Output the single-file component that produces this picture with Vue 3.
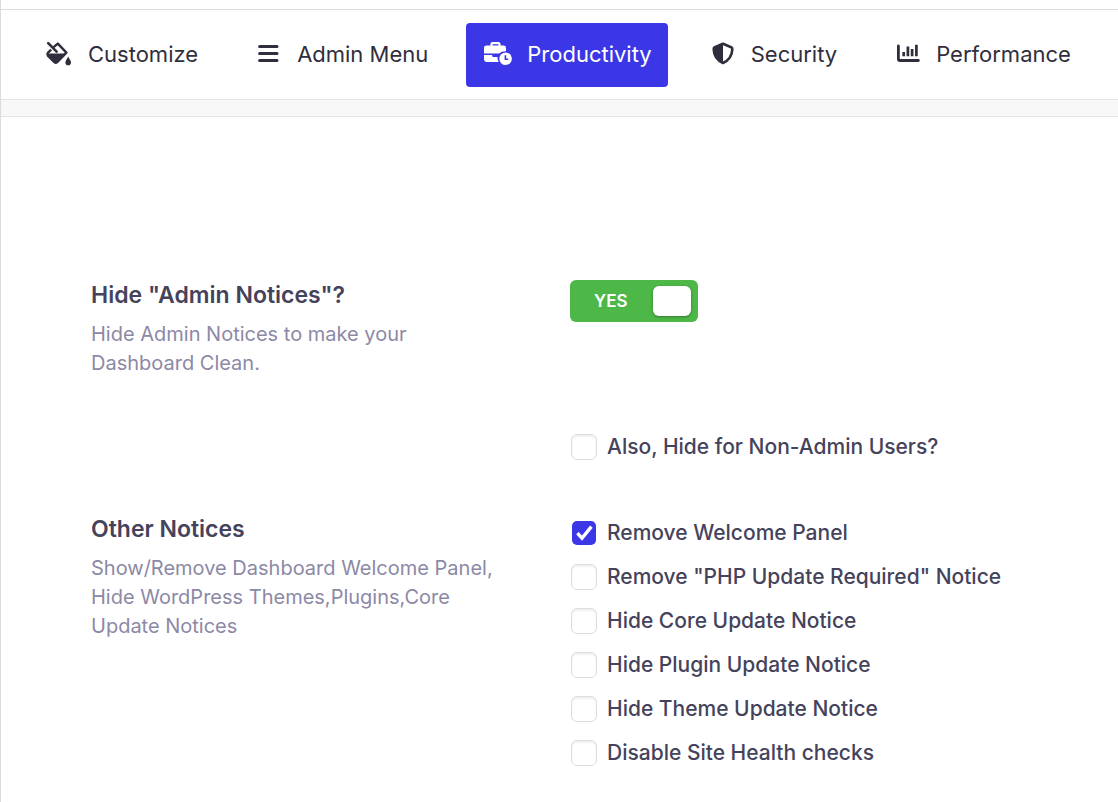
<script setup>
import { ref } from 'vue'

const tabs = [
  { id: 'customize', label: 'Customize' },
  { id: 'menu', label: 'Admin Menu' },
  { id: 'productivity', label: 'Productivity' },
  { id: 'security', label: 'Security' },
  { id: 'performance', label: 'Performance' }
]
const activeTab = ref('productivity')

const hideNotices = ref(true)
const hideForNonAdmin = ref(false)

const otherNotices = ref([
  { id: 'welcome-panel', label: 'Remove Welcome Panel', checked: true },
  { id: 'php-update', label: 'Remove "PHP Update Required" Notice', checked: false },
  { id: 'core-update', label: 'Hide Core Update Notice', checked: false },
  { id: 'plugin-update', label: 'Hide Plugin Update Notice', checked: false },
  { id: 'theme-update', label: 'Hide Theme Update Notice', checked: false },
  { id: 'site-health', label: 'Disable Site Health checks', checked: false }
])
</script>

<template>
  <div class="admin-page">
    <nav class="tabs">
      <button
        v-for="tab in tabs"
        :key="tab.id"
        type="button"
        class="tab"
        :class="{ active: activeTab === tab.id }"
        @click="activeTab = tab.id"
      >
        <svg v-if="tab.id === 'customize'" class="icon" viewBox="0 0 28 28" aria-hidden="true">
          <path d="M3.2 3.2L11.6 11.6" fill="none" stroke="currentColor" stroke-width="2.6" stroke-linecap="round" />
          <path d="M8.6 7.2L12.8 3.6L21.4 12.6L12.2 22.2Q10.8 23.4 9.4 22.2L2.8 15.6Q1.8 14.2 2.8 12.9L6.2 9.6" fill="none" stroke="currentColor" stroke-width="2.4" stroke-linejoin="round" />
          <path d="M2 13.6H20.6L12.2 22.4Q10.8 23.6 9.4 22.4L2.6 15.8Z" fill="currentColor" />
          <path d="M23.2 16.6C22.4 18.4 20.4 20.6 20.4 22.4A2.8 2.8 0 0 0 26 22.4C26 20.6 24 18.4 23.2 16.6Z" fill="currentColor" />
        </svg>
        <svg v-else-if="tab.id === 'menu'" class="icon" viewBox="0 0 28 28" aria-hidden="true">
          <path d="M5.6 6.5H23M5.6 13.5H23M5.6 20.5H23" fill="none" stroke="currentColor" stroke-width="3" stroke-linecap="round" />
        </svg>
        <svg v-else-if="tab.id === 'productivity'" class="icon" viewBox="0 0 28 28" aria-hidden="true">
          <path d="M7.5 6V4.2Q7.5 3.2 8.5 3.2H14.5Q15.5 3.2 15.5 4.2V6" fill="none" stroke="currentColor" stroke-width="2.2" />
          <path d="M2.4 5.6H19.6Q22 5.6 22 8V11.2Q17.6 11 15.2 13.4H0V8Q0 5.6 2.4 5.6Z" fill="currentColor" />
          <path d="M0 15H8.2V16Q8.2 17 9.2 17H13.4Q13.4 20 14.8 22H2.4Q0 22 0 19.6Z" fill="currentColor" />
          <circle cx="21.6" cy="18.8" r="6.3" fill="currentColor" />
          <path class="clock-hand" d="M21.4 15.2V19.2H24.2" fill="none" stroke-width="1.6" />
        </svg>
        <svg v-else-if="tab.id === 'security'" class="icon" viewBox="0 0 28 28" aria-hidden="true">
          <path d="M15 3.8L23.2 7.2Q24.4 7.8 24.3 9.2C24.1 15.8 21 20.2 15 23C9 20.2 5.9 15.8 5.7 9.2Q5.6 7.8 6.8 7.2Z" fill="none" stroke="currentColor" stroke-width="2.6" stroke-linejoin="round" />
          <path d="M15 3.8L6.8 7.2Q5.6 7.8 5.7 9.2C5.9 15.8 9 20.2 15 23Z" fill="currentColor" />
        </svg>
        <svg v-else class="icon" viewBox="0 0 28 28" aria-hidden="true">
          <path d="M5.4 6V19Q5.4 20.5 6.9 20.5H25.4" fill="none" stroke="currentColor" stroke-width="2.8" stroke-linecap="round" stroke-linejoin="round" />
          <path d="M10.7 12V16.2M14.9 6.4V16.2M19.1 9V16.2M23.4 4.8V16.2" fill="none" stroke="currentColor" stroke-width="2.7" />
        </svg>
        <span>{{ tab.label }}</span>
      </button>
    </nav>

    <main class="settings">
      <section class="setting">
        <div class="setting-info">
          <h2>Hide "Admin Notices"?</h2>
          <p>Hide Admin Notices to make your Dashboard Clean.</p>
        </div>
        <div class="setting-fields">
          <label class="switch">
            <input v-model="hideNotices" type="checkbox" aria-label="Hide Admin Notices" />
            <span class="switch-text">{{ hideNotices ? 'YES' : 'NO' }}</span>
            <span class="knob"></span>
          </label>
          <div class="check-row sub-option">
            <input id="non-admin" v-model="hideForNonAdmin" type="checkbox" />
            <label for="non-admin">Also, Hide for Non-Admin Users?</label>
          </div>
        </div>
      </section>

      <section class="setting">
        <div class="setting-info">
          <h2>Other Notices</h2>
          <p>Show/Remove Dashboard Welcome Panel, Hide WordPress Themes,Plugins,Core Update Notices</p>
        </div>
        <div class="setting-fields check-list">
          <div v-for="notice in otherNotices" :key="notice.id" class="check-row">
            <span class="box">
              <input :id="notice.id" v-model="notice.checked" type="checkbox" />
              <svg v-if="notice.checked" class="tick" viewBox="0 0 26 26" aria-hidden="true">
                <path d="M6.4 13.2L11 18.2L20.4 6.6" fill="none" stroke="currentColor" stroke-width="3.4" />
              </svg>
            </span>
            <label :for="notice.id">{{ notice.label }}</label>
          </div>
        </div>
      </section>
    </main>
  </div>
</template>

<style>
body {
  margin: 0;
  background: #fff;
}
</style>

<style scoped>
.admin-page {
  box-sizing: border-box;
  min-height: 100vh;
  padding-top: 9px;
  border-left: 1px solid #dcdcde;
  font-family: Inter, "Liberation Sans", sans-serif;
  color: #45435b;
}

.tabs {
  display: flex;
  gap: 22px;
  padding: 13px 26px 12px;
  border-top: 1px solid #dcdcde;
  border-bottom: 1px solid #e4e4e6;
}

.tab {
  display: flex;
  align-items: center;
  gap: 15px;
  height: 64px;
  padding: 0 16px 2px 18px;
  border: 0;
  border-radius: 4px;
  background: none;
  color: #302e3d;
  font-family: inherit;
  font-size: 22px;
  white-space: nowrap;
  cursor: pointer;
}

.tab.active {
  background: #3b37e6;
  color: #fff;
}

.icon {
  flex: none;
  width: 28px;
  height: 28px;
}

.clock-hand {
  stroke: #3b37e6;
}

.settings {
  padding: 164px 90px 24px;
  border-top: 16px solid #f8f8f8;
  box-shadow: inset 0 1px #e4e4e6;
}

.setting {
  display: grid;
  grid-template-columns: 410px 1fr;
  column-gap: 69px;
  margin-bottom: 54px;
}

.setting:last-child {
  margin-bottom: 0;
}

.setting-info {
  padding-top: 1px;
}

h2 {
  margin: 0 0 10px;
  font-size: 23px;
  font-weight: 600;
  line-height: 29px;
}

p {
  margin: 0;
  color: #8c89a6;
  font-size: 20px;
  line-height: 29px;
}

.switch {
  position: relative;
  display: flex;
  align-items: center;
  justify-content: space-between;
  box-sizing: border-box;
  width: 128px;
  height: 42px;
  padding: 0 7px 0 24px;
  border-radius: 6px;
  background: #b4b4bd;
  cursor: pointer;
}

.switch:has(input:checked) {
  background: #4db848;
}

.switch input {
  position: absolute;
  inset: 0;
  width: 100%;
  height: 100%;
  margin: 0;
  opacity: 0;
  cursor: pointer;
}

.switch-text {
  color: #fff;
  font-size: 17px;
  font-weight: 600;
}

.knob {
  width: 38px;
  height: 30px;
  border-radius: 6px;
  background: #fff;
  box-shadow: 0 1px 3px rgba(0, 0, 0, 0.35);
}

.check-list {
  display: flex;
  flex-direction: column;
  gap: 18px;
  padding-top: 6px;
}

.check-row {
  display: flex;
  align-items: center;
  gap: 10px;
  height: 26px;
  padding-left: 1px;
}

.check-row.sub-option {
  margin-top: 112px;
}

.check-row input {
  display: block;
  appearance: none;
  box-sizing: border-box;
  flex: none;
  width: 26px;
  height: 26px;
  margin: 0;
  border: 1px solid #dddde1;
  border-radius: 6px;
  background: #fff;
  box-shadow: inset 0 2px 2px rgba(0, 0, 0, 0.06);
}

.check-row input:checked {
  border-color: transparent;
  background: #3b37e6;
  background-clip: padding-box;
  box-shadow: none;
}

.check-row label {
  font-size: 21px;
  font-weight: 500;
  line-height: 26px;
}

.box {
  position: relative;
}

.tick {
  position: absolute;
  inset: 0;
  color: #fff;
  pointer-events: none;
}
</style>
